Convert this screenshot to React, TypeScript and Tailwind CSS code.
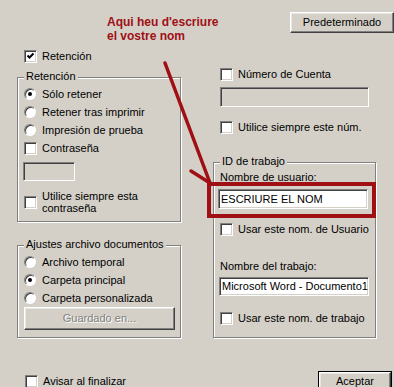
import * as React from 'react'

const RED = '#a00f14'

const sunken =
  'border border-t-[#808080] border-l-[#808080] border-b-white border-r-white shadow-[inset_1px_1px_0_#404040,inset_-1px_-1px_0_#d4d0c8]'
const raised =
  'border border-t-white border-l-white border-b-[#404040] border-r-[#404040] shadow-[inset_-1px_-1px_0_#808080,inset_1px_1px_0_#e8e6e2]'

function Check({ checked = false }: { checked?: boolean }) {
  return (
    <span className={`flex h-[13px] w-[13px] shrink-0 items-center justify-center bg-white ${sunken}`}>
      {checked && (
        <svg width="9" height="9" viewBox="0 0 9 9">
          <path d="M1.5 3.5 L3.5 5.5 L7.5 1.5" fill="none" stroke="#000" strokeWidth="2" />
        </svg>
      )}
    </span>
  )
}

function Radio({ checked = false }: { checked?: boolean }) {
  return (
    <span className="flex h-[12px] w-[12px] shrink-0 items-center justify-center rounded-full border border-t-[#808080] border-l-[#808080] border-b-white border-r-white bg-white shadow-[inset_1px_1px_0_#404040]">
      {checked && <span className="h-[4px] w-[4px] rounded-full bg-black" />}
    </span>
  )
}

function CheckRow({
  label,
  checked,
  className = '',
}: {
  label: React.ReactNode
  checked?: boolean
  className?: string
}) {
  return (
    <div className={`flex items-center gap-[5px] ${className}`}>
      <Check checked={checked} />
      <span className="leading-[13px] whitespace-nowrap">{label}</span>
    </div>
  )
}

function RadioRow({ label, checked }: { label: string; checked?: boolean }) {
  return (
    <div className="flex h-[18px] items-center gap-[6px]">
      <Radio checked={checked} />
      <span className="leading-[13px] whitespace-nowrap">{label}</span>
    </div>
  )
}

function Group({
  title,
  className = '',
  children,
}: {
  title: string
  className?: string
  children: React.ReactNode
}) {
  return (
    <div
      className={`relative flex flex-col border border-[#808080] shadow-[inset_1px_1px_0_#fff,1px_1px_0_#fff] ${className}`}
    >
      <span className="absolute -top-[8px] left-[6px] bg-[#d4d0c8] px-[2px] leading-[13px] whitespace-nowrap">
        {title}
      </span>
      {children}
    </div>
  )
}

export default function App() {
  return (
    <div className="relative h-[387px] w-[394px] overflow-hidden bg-[#d4d0c8] font-['Liberation_Sans',Arial,sans-serif] text-[11px] text-black">
      {/* cabecera */}
      <div className="flex h-[44px] items-start">
        <div
          className="ml-[107px] mt-[15px] text-[12px] font-bold leading-[14px]"
          style={{ color: RED }}
        >
          Aqui heu d'escriure
          <br />
          el vostre nom
        </div>
        <button
          className={`ml-auto mt-[12px] flex h-[21px] w-[104px] items-center justify-center bg-[#d4d0c8] ${raised}`}
        >
          Predeterminado
        </button>
      </div>

      <div className="flex">
        {/* columna izquierda */}
        <div className="flex w-[180px] flex-col pl-[17px]">
          <CheckRow label="Retención" checked className="mt-[6px] h-[13px] pl-[7px]" />

          <Group title="Retención" className="mt-[14px] h-[145px] w-[164px] pl-[6px] pt-[7px]">
            <RadioRow label="Sólo retener" checked />
            <RadioRow label="Retener tras imprimir" />
            <RadioRow label="Impresión de prueba" />
            <CheckRow label="Contraseña" className="h-[18px]" />
            <div className={`-ml-[1px] mt-[5px] h-[19px] w-[52px] bg-[#d4d0c8] ${sunken}`} />
            <div className="mt-[9px] flex items-center gap-[5px]">
              <Check />
              <span className="leading-[12px]">
                Utilice siempre esta
                <br />
                contraseña
              </span>
            </div>
          </Group>

          <Group
            title="Ajustes archivo documentos"
            className="mt-[23px] h-[93px] w-[164px] pl-[6px] pt-[7px]"
          >
            <RadioRow label="Archivo temporal" />
            <RadioRow label="Carpeta principal" checked />
            <RadioRow label="Carpeta personalizada" />
            <button
              className={`flex h-[23px] w-[151px] items-center justify-center bg-[#d4d0c8] text-[#808080] [text-shadow:1px_1px_0_#fff] ${raised}`}
            >
              Guardado en...
            </button>
          </Group>

          <CheckRow label="Avisar al finalizar" className="mt-[37px] h-[13px] pl-[8px]" />
        </div>

        {/* columna derecha */}
        <div className="flex flex-col pl-[33px]">
          <CheckRow label="Número de Cuenta" className="ml-[7px] mt-[24px] h-[13px]" />
          <div className={`ml-[7px] mt-[6px] h-[20px] w-[149px] bg-[#d4d0c8] ${sunken}`} />
          <CheckRow label="Utilice siempre este núm." className="ml-[7px] mt-[14px] h-[13px]" />

          <Group title="ID de trabajo" className="mt-[28px] h-[176px] w-[163px]">
            <div className="ml-[6px] mt-[8px] leading-[13px]">Nombre de usuario:</div>
            <div
              className="-ml-[7px] -mt-[2px] h-[36px] w-[169px] border-4 pl-[7px] pt-[3px]"
              style={{ borderColor: RED }}
            >
              <div
                className={`flex h-[20px] w-[150px] items-center bg-white pl-[2px] leading-[13px] ${sunken}`}
              >
                ESCRIURE EL NOM
              </div>
            </div>
            <CheckRow label="Usar este nom. de Usuario" className="ml-[6px] mt-[5px] h-[13px]" />
            <div className="ml-[6px] mt-[24px] leading-[13px]">Nombre del trabajo:</div>
            <div
              className={`ml-[5px] mt-[4px] flex h-[19px] w-[150px] items-center overflow-hidden bg-white pl-[2px] leading-[13px] whitespace-nowrap ${sunken}`}
            >
              Microsoft Word - Documento1
            </div>
            <CheckRow label="Usar este nom. de trabajo" className="ml-[6px] mt-[16px] h-[13px]" />
          </Group>

          <button
            className="ml-[105px] mt-[33px] h-[23px] w-[74px] border border-black bg-[#d4d0c8]"
          >
            <span
              className={`flex h-full w-full items-start justify-center pt-[2px] leading-[13px] ${raised}`}
            >
              Aceptar
            </span>
          </button>
        </div>
      </div>

      {/* flecha de la anotación */}
      <svg
        className="pointer-events-none absolute left-0 top-0"
        width="394"
        height="387"
        viewBox="0 0 394 387"
      >
        <g stroke={RED} strokeWidth="3.5" strokeLinecap="round" fill="none">
          <line x1="165" y1="63" x2="210" y2="183" />
          <line x1="191" y1="171" x2="210" y2="183" />
        </g>
      </svg>
    </div>
  )
}
